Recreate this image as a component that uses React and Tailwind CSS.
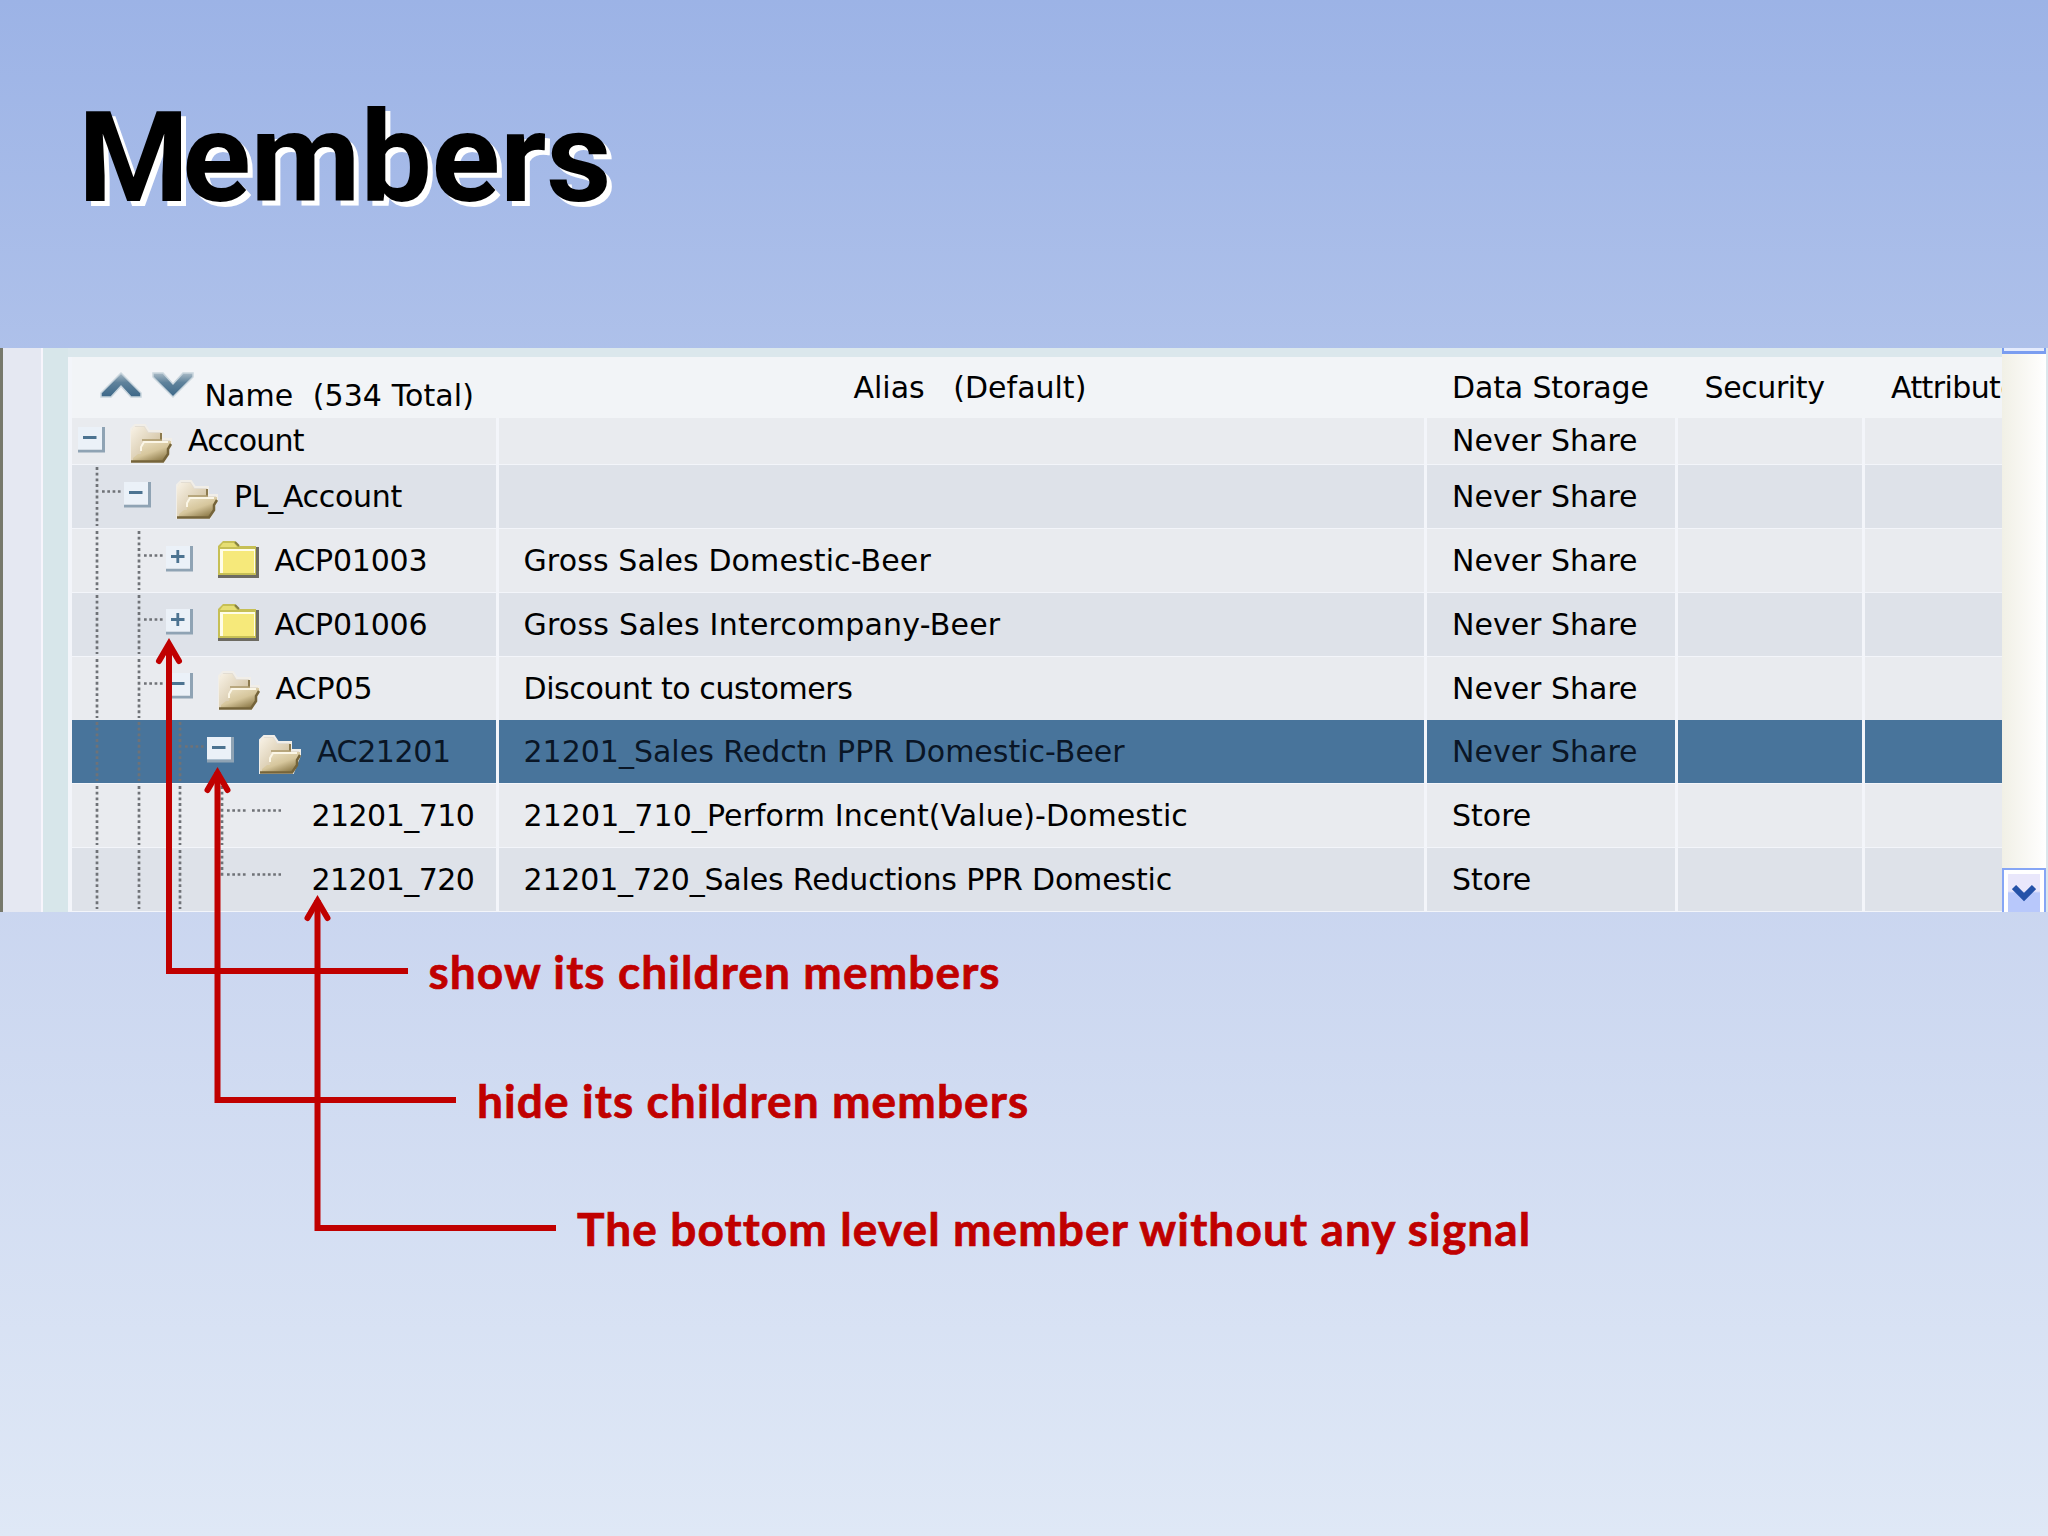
import React from 'react';

const rows = [
    { name: 'Account', nameClass: 'tracking-[-0.75px]', alias: '', storage: 'Never Share', level: 0, toggle: 'minus', folder: 'open' },
    { name: 'PL_Account', nameClass: 'tracking-[-0.3px]', alias: '', storage: 'Never Share', level: 1, toggle: 'minus', folder: 'open' },
    { name: 'ACP01003', nameClass: 'tracking-[-0.2px]', alias: 'Gross Sales Domestic-Beer', aliasClass: 'tracking-[0.12px]', storage: 'Never Share', level: 2, toggle: 'plus', folder: 'closed' },
    { name: 'ACP01006', nameClass: 'tracking-[-0.2px]', alias: 'Gross Sales Intercompany-Beer', aliasClass: 'tracking-[0.22px]', storage: 'Never Share', level: 2, toggle: 'plus', folder: 'closed' },
    { name: 'ACP05', alias: 'Discount to customers', aliasClass: 'tracking-[-0.42px]', storage: 'Never Share', level: 2, toggle: 'minus', folder: 'open' },
    { name: 'AC21201', nameClass: 'tracking-[-0.4px]', alias: '21201_Sales Redctn PPR Domestic-Beer', storage: 'Never Share', level: 3, toggle: 'minus', folder: 'open', selected: true },
    { name: '21201_710', nameClass: 'tracking-[-0.55px]', alias: '21201_710_Perform Incent(Value)-Domestic', aliasClass: 'tracking-[0.07px]', storage: 'Store', level: 4 },
    { name: '21201_720', nameClass: 'tracking-[-0.55px]', alias: '21201_720_Sales Reductions PPR Domestic', aliasClass: 'tracking-[-0.17px]', storage: 'Store', level: 4, last: true },
];

const notes = [
    { text: 'show its children members', className: 'pl-[428.5px]' },
    { text: 'hide its children members', className: 'pl-[477px]' },
    { text: 'The bottom level member without any signal', className: 'pl-[577px]' },
];

const columns = 'grid grid-cols-[423.5px_925px_248px_184px_142px] gap-x-[3px]';

const Toggle = ({ type }) => (
    <svg className="w-[27px] h-[26px] shrink-0" viewBox="0 0 27 26">
        <path d="M0 24H25.5V0" fill="none" stroke="#8fa3b4" strokeWidth="3" />
        <rect width="24" height="22.5" fill="#ebf1f8" />
        <path d="M5 10.5H18.5" stroke="#4c7391" strokeWidth="3" />
        {type === 'plus' && <path d="M11.8 4V17" stroke="#4c7391" strokeWidth="2.8" />}
    </svg>
);

const OpenFolder = () => (
    <svg className="w-[43px] h-[40px] shrink-0" viewBox="0 0 43 40">
        <defs>
            <linearGradient id="folderBack" x1="0" y1="0" x2="1" y2="1">
                <stop offset="0" stopColor="#f8f2e6" />
                <stop offset="1" stopColor="#c5b28a" />
            </linearGradient>
            <linearGradient id="folderFront" x1="0" y1="0" x2="0.7" y2="1">
                <stop offset="0" stopColor="#f0e6cc" />
                <stop offset="0.6" stopColor="#d6c69c" />
                <stop offset="1" stopColor="#8f7c4b" />
            </linearGradient>
        </defs>
        <path d="M1 38V5L5 1H15L19 7H32V15H41V20L34 38Z" fill="#e3ddd2" stroke="#f1eee8" strokeWidth="2" />
        <path d="M1 37V7L4 3H14L18 9H32V20H11V37Z" fill="url(#folderBack)" />
        <path d="M31 9V16" stroke="#8c7a4e" strokeWidth="2" />
        <path d="M11 30V23L14 17H41V21L38 24V29L33 37H3V34L8 30Z" fill="url(#folderFront)" />
        <path d="M11 27V23L14 18H38" fill="none" stroke="#fbf6e6" strokeWidth="2" />
        <path d="M12 16H32" stroke="#ab986a" strokeWidth="1.5" />
        <path d="M1 37.5H33L38 30V25L41 20" fill="none" stroke="#75643a" strokeWidth="2.5" />
    </svg>
);

const ClosedFolder = () => (
    <svg className="w-[42px] h-[37px] shrink-0" viewBox="0 0 42 37">
        <path d="M0 37V34H38V6H41V37Z" fill="#6d6b62" />
        <path d="M0 34V5L5 0H17L21 5H38V34Z" fill="#c6bf55" />
        <path d="M5 2H16L19 6H2Z" fill="#e6de73" />
        <path d="M17 1L21 5" stroke="#85803f" strokeWidth="2" />
        <rect x="2" y="8" width="35" height="24" fill="#fffde8" />
        <rect x="5" y="10" width="31" height="22" fill="#f6e97a" />
    </svg>
);

// vertical dotted line of one tree level, with an optional arm to the node
const Guide = ({ wide, branch, end }) => (
    <div className={`${wide ? 'w-[52px]' : 'w-[41.5px]'} h-full shrink-0 flex justify-end`}>
        <svg className="w-[30px] h-[61px]" viewBox="0 0 30 61" stroke="#6f7277" strokeWidth="2.7">
            <path d={end ? 'M3 2V28' : 'M3 2V61'} strokeDasharray="2.9 2.8" />
            {branch && <path d="M8 26.5H27" strokeDasharray="2.7 2.6" />}
        </svg>
    </div>
);

const NameCell = ({ row }) => (
    <div className="flex h-full overflow-hidden">
        {Array.from({ length: row.level }, (_, i) => (
            <Guide key={i} wide={i === 0} branch={i === row.level - 1} end={row.last && i === row.level - 1} />
        ))}
        {row.toggle ? (
            <div className={`flex items-start ${row.level === 0 ? 'pl-1.5 pt-[9px]' : 'pt-[16.5px]'}`}>
                <Toggle type={row.toggle} />
                <div className="w-[25px]" />
                <div className={row.level === 0 ? '-mt-[3px]' : row.folder === 'open' ? '-mt-0.5' : '-mt-[5px]'}>
                    {row.folder === 'open' ? <OpenFolder /> : <ClosedFolder />}
                </div>
            </div>
        ) : (
            <svg className="w-[32px] h-[61px]" viewBox="0 0 32 61">
                <path d="M3 26.5H32" stroke="#6f7277" strokeWidth="2.7" strokeDasharray="2.7 2.6" />
            </svg>
        )}
        <span
            className={`${row.toggle ? 'pl-[15px]' : 'pl-[31px]'} ${row.level === 0 ? 'leading-[46px]' : 'leading-[63px]'} ${row.nameClass || ''}`}
        >
            {row.name}
        </span>
    </div>
);

const Row = ({ row, index }) => {
    const first = row.level === 0;
    const bg = row.selected ? 'bg-[#48749b]' : index % 2 ? 'bg-[#dee2e9]' : 'bg-[#e9ebef]';
    const height = first ? 'h-[45px] leading-[46px]' : 'h-[61px] leading-[63px]';

    return (
        <div className={`${columns} ${height} mb-[2.75px] ${row.selected ? 'text-[#0a1626]' : 'text-black'}`}>
            <div className={bg}><NameCell row={row} /></div>
            <div className={`${bg} pl-[25px] ${row.aliasClass || ''}`}>{row.alias}</div>
            <div className={`${bg} pl-[25.5px]`}>{row.storage}</div>
            <div className={bg} />
            <div className={bg} />
        </div>
    );
};

const SortArrow = ({ down }) => (
    <svg className="w-[42px] h-[28px]" viewBox="0 0 42 28">
        <defs>
            <linearGradient id="sortFill" x1="0" y1="0" x2="0" y2="1">
                <stop offset="0" stopColor="#a9bac6" />
                <stop offset="0.4" stopColor="#5f829b" />
                <stop offset="1" stopColor="#3c6788" />
            </linearGradient>
        </defs>
        <path
            d={down ? 'M1 2H11L21 13L31 2H41V6L21 26L1 6Z' : 'M1 26H11L21 15L31 26H41V22L21 2L1 22Z'}
            fill="url(#sortFill)"
            stroke="#c9d5dd"
            strokeWidth="1.5"
        />
    </svg>
);

const Scrollbar = () => (
    <div className="w-[44px] flex flex-col justify-between bg-gradient-to-r from-[#f1f0e6] to-white">
        <div className="h-[6px] border-x-2 border-b-3 border-[#7a9df0] bg-[#e4ebfd]" />
        <div className="h-[44px] border-2 border-b-0 border-[#86a6f5] bg-white p-1 pb-0">
            <div className="h-full bg-gradient-to-b from-[#e9e7fb] from-45% to-[#b8c8fb] to-50% flex justify-center pt-[9px]">
                <svg className="w-[24px] h-[20px]" viewBox="0 0 24 20">
                    <path d="M2 4L12 14L22 4" fill="none" stroke="#2452a8" strokeWidth="6" />
                </svg>
            </div>
        </div>
    </div>
);

const Arrow = ({ x, top, bottom, end }) => (
    <g fill="none" stroke="#c00000" strokeWidth="6">
        <path d={`M${x} ${top + 4}V${bottom}H${end}`} />
        <path d={`M${x - 10} ${top + 22}L${x} ${top + 5}L${x + 10} ${top + 22}`} strokeLinecap="round" />
    </g>
);

const App = () => {
    return (
        <div className="relative w-[2048px] h-[1536px] overflow-hidden bg-linear-to-b from-[#9cb3e6] via-[#c8d4ef] via-55% to-[#dfe8f6]">
            {/* Title */}
            <h1 className="h-[348px] pl-[78px] pt-[83px] font-[Roboto,sans-serif] font-bold text-[127px] leading-[150px] tracking-[-0.2px] text-black [text-shadow:5px_5px_0_#fff]">
                <span className="tracking-[-7px]">M</span>embers
            </h1>

            {/* Member grid */}
            <div className="flex h-[564px] bg-[#dbe7ec] font-['DejaVu_Sans',sans-serif] text-[30px] whitespace-pre">
                <div className="w-[3px] bg-[#77796c]" />
                <div className="w-[40px] bg-[#e5e8f2] border-r-2 border-[#f7f5fc]" />
                <div className="w-[25px] bg-[#d7e6ea]" />
                <div className="w-[1934px] mt-[9px] pl-1 bg-[#f3f5fa] overflow-hidden">
                    <div className={`${columns} h-[60.5px] bg-[#f2f4f7]`}>
                        <div className="flex">
                            <div className="flex gap-[10px] pl-[28px] pt-[14px]">
                                <SortArrow />
                                <SortArrow down />
                            </div>
                            <span className="pl-[10.5px] pt-[16px] tracking-[0.1px]">Name  (534 Total)</span>
                        </div>
                        <div className="pl-[355px] pt-[8px]">Alias   (Default)</div>
                        <div className="pl-[25.5px] pt-[8px] tracking-[-0.15px]">Data Storage</div>
                        <div className="pl-[27px] pt-[8px] tracking-[-0.4px]">Security</div>
                        <div className="pl-[26.5px] pt-[8px] tracking-[-0.6px] overflow-hidden">Attribute</div>
                    </div>
                    {rows.map((row, index) => (
                        <Row key={row.name} row={row} index={index} />
                    ))}
                </div>
                <Scrollbar />
            </div>

            {/* Notes */}
            <div className="pt-[28px] font-[Lato,sans-serif] font-bold text-[46px] tracking-[1.1px] text-[#c00000] [-webkit-text-stroke:0.7px_#c00000]">
                {notes.map((note) => (
                    <p key={note.text} className={`${note.className} h-[128.5px] leading-[64px]`}>{note.text}</p>
                ))}
            </div>

            {/* Arrows over the grid */}
            <svg className="absolute inset-0 w-[2048px] h-[1536px]" viewBox="0 0 2048 1536">
                <Arrow x={169} top={639} bottom={971} end={408} />
                <Arrow x={217.5} top={768} bottom={1100} end={456} />
                <Arrow x={317.5} top={896} bottom={1228} end={556} />
            </svg>
        </div>
    );
};

export default App;
